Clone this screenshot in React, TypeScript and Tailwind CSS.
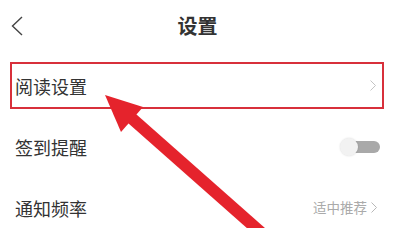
import React from "react";

const Chevron = ({ className }: { className?: string }) => (
  <svg viewBox="0 0 6 11" className={className} fill="none">
    <polyline points="0.5,0.5 5.5,5.5 0.5,10.5" stroke="currentColor" strokeWidth="1" />
  </svg>
);

export default function App() {
  return (
    <div
      className="relative w-[395px] h-[228px] overflow-hidden bg-white text-[#333]"
      style={{ fontFamily: '"Noto Sans CJK SC", "Noto Sans", sans-serif' }}
    >
      {/* Header */}
      <div className="relative flex h-[55px] items-center justify-center pb-[3px]">
        <svg viewBox="0 0 12 20" className="absolute left-[11px] top-[16px] h-[20px] w-[12px]" fill="none">
          <polyline points="11,1 1.5,10 11,19" stroke="#444" strokeWidth="1.4" />
        </svg>
        <span className="text-[20px] font-bold leading-none">设置</span>
      </div>

      {/* Rows */}
      <div className="relative flex h-[61px] items-center justify-between pl-[15px] pr-[19px]">
        <span className="text-[18px] leading-none">阅读设置</span>
        <Chevron className="h-[11px] w-[6px] text-[#c4c4c4]" />
        <div className="absolute left-[10px] top-[7px] h-[47px] w-[374px] border-2 border-[#d8303b]" />
      </div>

      <div className="flex h-[61px] items-center justify-between pl-[15px] pr-[15px]">
        <span className="text-[18px] leading-none">签到提醒</span>
        <div className="relative h-[18px] w-[40px]">
          <div className="absolute right-0 top-[3px] h-[12px] w-[32px] rounded-full bg-[#a9a9a9]" />
          <div className="absolute left-0 top-0 h-[18px] w-[18px] rounded-full bg-[#f2f2f2] shadow-[0_0_2px_rgba(0,0,0,0.15)]" />
        </div>
      </div>

      <div className="flex h-[61px] items-center justify-between pl-[15px] pr-[18px]">
        <span className="text-[18px] leading-none">通知频率</span>
        <div className="flex items-center gap-[4px] text-[#aaa]">
          <span className="text-[13.5px] leading-none">适中推荐</span>
          <Chevron className="h-[11px] w-[6px] text-[#b8b8b8]" />
        </div>
      </div>

      {/* Annotation arrow */}
      <svg className="pointer-events-none absolute left-0 top-0 h-[228px] w-[395px]" viewBox="0 0 395 228">
        <line x1="128" y1="115" x2="300" y2="267" stroke="#e5232c" strokeWidth="12" />
        <polygon points="105,95 143,107 121,132" fill="#e5232c" />
      </svg>
    </div>
  );
}
